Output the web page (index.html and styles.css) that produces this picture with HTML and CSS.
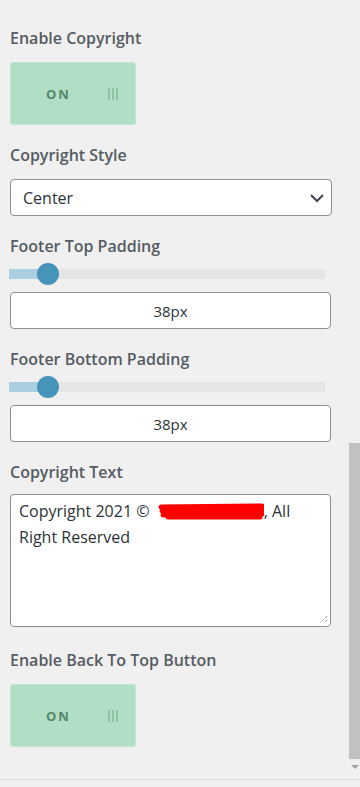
FILE: index.html
```html
<!DOCTYPE html>
<html lang="en">
<head>
<meta charset="UTF-8">
<meta name="viewport" content="width=device-width,initial-scale=1">
<title>Footer Settings</title>
<link rel="stylesheet" href="styles.css">
</head>
<body>

<div class="frame">
  <main class="panel">

    <!-- Copyright toggle -->
    <div class="field">
      <label class="label">Enable Copyright</label>
      <div class="toggle"><span class="on">ON</span><span class="grip"></span></div>
    </div>

    <div class="field">
      <label class="label">Copyright Style</label>
      <div class="select">
        <span>Center</span>
        <svg width="16" height="10" viewBox="0 0 16 10"><path d="M2 2l6 6 6-6" fill="none" stroke="#3c434a" stroke-width="2"/></svg>
      </div>
    </div>

    <!-- Paddings -->
    <div class="field">
      <label class="label">Footer Top Padding</label>
      <div class="range"><div class="fill"></div><div class="thumb"></div></div>
      <div class="num">38px</div>
    </div>

    <div class="field">
      <label class="label">Footer Bottom Padding</label>
      <div class="range"><div class="fill"></div><div class="thumb"></div></div>
      <div class="num">38px</div>
    </div>

    <div class="field text">
      <label class="label">Copyright Text</label>
      <div class="textarea">
        Copyright 2021 &copy; <span class="redact"><svg width="106" height="18" viewBox="0 0 106 18"><path d="M3 5 L104 4 M4 9 L105 8 M5 13 L104 12 M10 15 L102 15" fill="none" stroke="#ff0000" stroke-width="5" stroke-linecap="round"/></svg></span>, All Right Reserved
        <svg class="resize" width="10" height="10" viewBox="0 0 10 10"><path d="M9 2L2 9M9 6L6 9" stroke="#7a7a7a" stroke-width="1" stroke-dasharray="1 1"/></svg>
      </div>
    </div>

    <div class="field">
      <label class="label">Enable Back To Top Button</label>
      <div class="toggle"><span class="on">ON</span><span class="grip"></span></div>
    </div>

  </main>

  <!-- scrollbar -->
  <div class="scrollbar">
    <div class="sb-thumb"></div>
    <div class="sb-arrow"></div>
  </div>
</div>

<div class="bottom"></div>

</body>
</html>
```

FILE: styles.css
```css
*{box-sizing:border-box}
body{
  margin:0;background:#f0f0f0;
  font-family:'Segoe UI','Open Sans',sans-serif;color:#2c3338;
}
.frame{display:flex;height:779px}
.panel{flex:1;padding:26px 17px 0 10px}

.field{margin-bottom:18px}
.label{display:block;font-size:16px;line-height:24px;font-weight:600;color:#555c63;margin-bottom:12px}

/* Toggle */
.toggle{
  width:126px;height:63px;background:#b1dfc5;border:1px solid #c2e6d2;border-radius:3px;
  display:flex;align-items:center;padding-left:35px;
}
.toggle .on{font-size:13px;font-weight:700;letter-spacing:2px;color:#55876c}
.toggle .grip{
  margin-left:37px;width:10px;height:12px;
  background:repeating-linear-gradient(90deg,#8fc3a3 0 2px,transparent 2px 4px);
}

/* Select */
.select{
  width:322px;height:37px;background:#fff;border:1px solid #8c8f94;border-radius:4px;
  display:flex;align-items:center;justify-content:space-between;padding:0 6px 0 12px;
  font-size:16px;
}

/* Range slider */
.range{position:relative;width:316px;height:22px;margin:-7px 0 7px -1px}
.range:before{content:"";position:absolute;left:0;right:0;top:6px;height:10px;background:#e5e5e5}
.range .fill{position:absolute;left:0;top:6px;height:10px;width:40px;background:#a9cfe1}
.range .thumb{position:absolute;left:28px;top:0;width:22px;height:22px;border-radius:50%;background:#4794bb}
.num{
  width:321px;height:37px;background:#fff;border:1px solid #8c8f94;border-radius:4px;
  display:flex;align-items:center;justify-content:center;font-size:15px;
}

/* Textarea */
.field.text{margin-bottom:21px}
.field.text .label{margin-bottom:10px}
.textarea{
  position:relative;width:321px;height:133px;background:#fff;border:1px solid #8c8f94;border-radius:4px;
  padding:3px 8px;font-size:16px;line-height:26px;
}
.redact{display:inline-block;vertical-align:-3px;margin-left:4px}
.redact svg{display:block}
.resize{position:absolute;right:2px;bottom:2px}

/* Scrollbar */
.scrollbar{width:11px;display:flex;flex-direction:column;align-items:stretch;padding-top:443px}
.sb-thumb{height:316px;background:#c1c1c1}
.sb-arrow{
  margin:6px auto 0;width:0;height:0;
  border-left:4px solid transparent;border-right:4px solid transparent;border-top:4px solid #a3a3a3;
}
.bottom{height:8px;border-top:1px solid #dcdcdc}
```
